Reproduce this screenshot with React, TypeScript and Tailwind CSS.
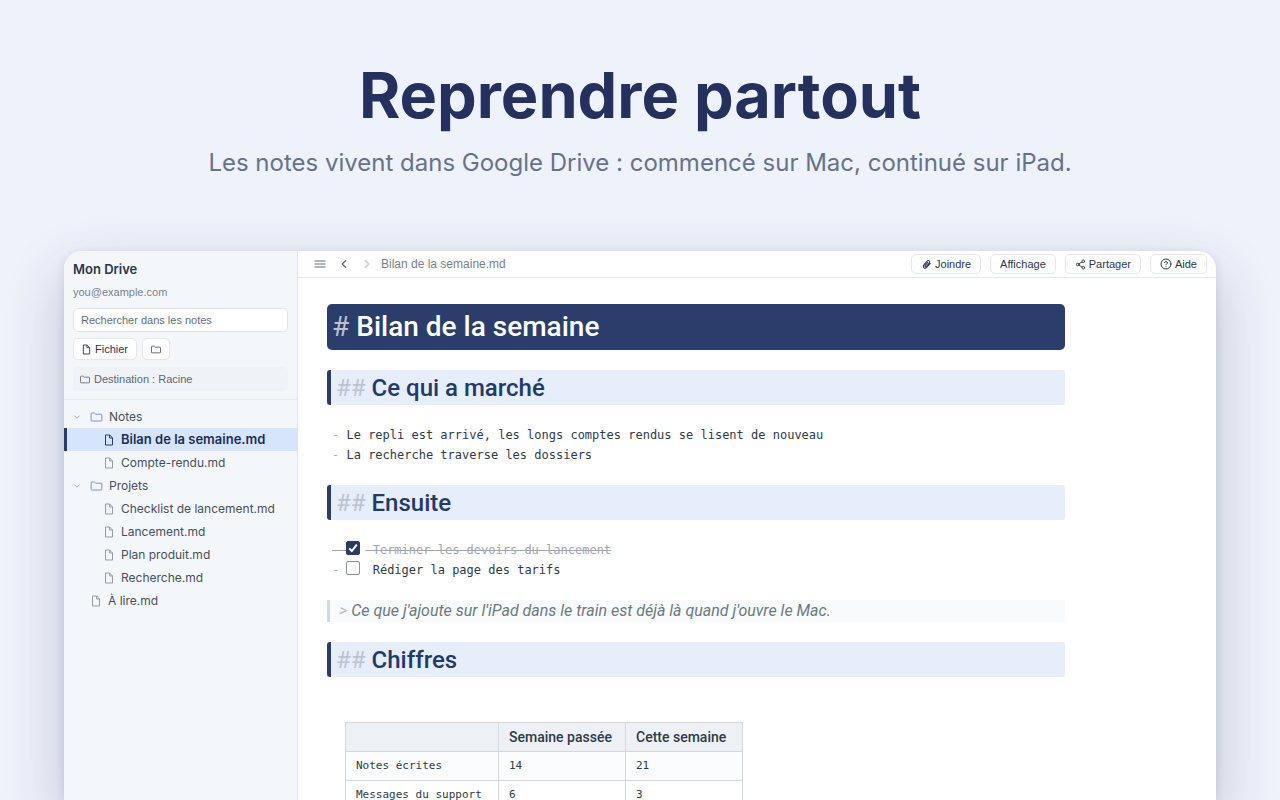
import React from 'react';
import { ChevronDown, ChevronLeft, ChevronRight, CircleHelp, Share2 } from 'lucide-react';

const tree = [
  { name: 'Notes', type: 'folder', depth: 0 },
  { name: 'Bilan de la semaine.md', type: 'file', depth: 1, active: true },
  { name: 'Compte-rendu.md', type: 'file', depth: 1 },
  { name: 'Projets', type: 'folder', depth: 0 },
  { name: 'Checklist de lancement.md', type: 'file', depth: 1 },
  { name: 'Lancement.md', type: 'file', depth: 1 },
  { name: 'Plan produit.md', type: 'file', depth: 1 },
  { name: 'Recherche.md', type: 'file', depth: 1 },
  { name: 'À lire.md', type: 'file', depth: 0 },
];

const rows = [
  ['Notes écrites', '14', '21'],
  ['Messages du support', '6', '3'],
];

function FileIcon({ className }: { className: string }) {
  return (
    <svg viewBox="0 0 10 12" className={className} fill="none" stroke="currentColor" strokeLinejoin="round">
      <path d="M1.5 1h4.2l2.8 2.9V11h-7z" />
      <path d="M5.6 1v3h2.9" />
    </svg>
  );
}

function FolderIcon({ className }: { className: string }) {
  return (
    <svg viewBox="0 0 12 10" className={className} fill="none" stroke="currentColor" strokeLinejoin="round">
      <path d="M.6 8.2V1.8q0-.8.8-.8h2.5l1.3 1.2h5.3q.9 0 .9.9v5.1q0 .8-.8.8H1.4q-.8 0-.8-.8z" />
    </svg>
  );
}

function MenuIcon() {
  return (
    <svg viewBox="0 0 12 12" className="h-3 w-3" fill="none" stroke="currentColor" strokeWidth="1.1">
      <path d="M.5 3h11M.5 6h11M.5 9h11" />
    </svg>
  );
}

function ClipIcon() {
  return (
    <svg viewBox="0 0 12 12" className="h-[11px] w-[11px]" fill="none" stroke="currentColor" strokeLinecap="round">
      <path d="M10 4.8 6.2 9.3a2 2 0 0 1-3.2-2.6l3.8-4.5a1.5 1.5 0 0 1 2.4 1.9L5.7 8.2a.8.8 0 0 1-1.3-1l3-3.5" strokeWidth="1.1" />
    </svg>
  );
}

function ToolbarButton({ children }: { children: React.ReactNode }) {
  return (
    <button className="flex h-5 items-center gap-[3px] rounded-[5px] border border-[#e3e6ea] bg-white px-[9px] text-[11px] text-[#2b3648]">
      {children}
    </button>
  );
}

function Heading({ children }: { children: React.ReactNode }) {
  return (
    <h2 className="flex h-[35px] items-center gap-[6px] rounded-[3px] border-l-4 border-[#2b3a67] bg-[#e6edfb] pl-[5px] font-['Roboto',sans-serif] text-2xl font-medium text-[#1f3b68]">
      <span className="font-normal text-[#bcc3d0]">##</span>
      {children}
    </h2>
  );
}

export default function App() {
  return (
    <div className="flex h-screen flex-col overflow-hidden bg-[#eef2fb] px-16 font-['Inter',sans-serif]">
      <header className="flex h-[251px] shrink-0 flex-col items-center pt-[59px] text-center">
        <h1 className="text-[63px] leading-[72px] font-bold text-[#24305e]">Reprendre partout</h1>
        <p className="mt-[14px] text-2xl leading-9 text-[#68718a]">
          Les notes vivent dans Google Drive : commencé sur Mac, continué sur iPad.
        </p>
      </header>

      <div className="flex min-h-0 flex-1 overflow-hidden rounded-t-[18px] bg-white shadow-[0_24px_60px_rgba(36,48,80,0.24),0_2px_8px_rgba(36,48,80,0.12)]">
        <aside className="w-[234px] shrink-0 border-r border-[#dfe3e8] bg-[#f4f7fa]">
          <div className="border-b border-[#e6e9ed] px-[9px] pt-[9px] pb-2">
            <div className="text-[13px] leading-[18px] font-semibold text-[#2b3648]">Mon Drive</div>
            <div className="mt-[6px] font-['Liberation_Sans',sans-serif] text-[11px] leading-4 text-[#7a828e]">you@example.com</div>
            <input
              type="search"
              aria-label="Rechercher dans les notes"
              placeholder="Rechercher dans les notes"
              className="mt-2 block h-6 w-full rounded-[5px] border border-[#dfe3e8] bg-white px-[7px] font-['Liberation_Sans',sans-serif] text-[11px] placeholder:text-[#666d78]"
            />
            <div className="mt-[6px] flex gap-[5px] font-['Liberation_Sans',sans-serif]">
              <button className="flex h-[22px] items-center gap-1 rounded-[5px] border border-[#e3e6ea] bg-white px-2 text-[11px] text-[#2b3648]">
                <FileIcon className="h-[11px] w-[9px]" />
                Fichier
              </button>
              <button aria-label="Nouveau dossier" className="flex h-[22px] items-center rounded-[5px] border border-[#e3e6ea] bg-white px-2 text-[#4a5361]">
                <FolderIcon className="h-[9px] w-[10px]" />
              </button>
            </div>
            <div className="mt-[7px] flex h-6 items-center gap-1 rounded-[5px] bg-[#eff2f6] px-[7px] font-['Liberation_Sans',sans-serif] text-[11px] text-[#5f6875]">
              <FolderIcon className="h-[9px] w-[10px]" />
              Destination : Racine
            </div>
          </div>

          <nav className="pt-[5px]">
            {tree.map((item) => (
              <a
                key={item.name}
                href="#"
                className={`flex h-[23px] items-center border-l-3 whitespace-nowrap ${
                  item.depth === 1 ? 'pl-[37px]' : item.type === 'file' ? 'pl-6' : 'pl-[5px]'
                } ${
                  item.active
                    ? 'border-[#2b3a67] bg-[#d6e5fb] text-[13px] font-semibold text-[#1f2d54]'
                    : 'border-transparent text-xs text-[#474f5c]'
                }`}
              >
                {item.type === 'folder' ? (
                  <>
                    <ChevronDown className="mr-2 h-[10px] w-[10px] text-[#9aa1ac]" />
                    <FolderIcon className="mr-[6px] h-[10px] w-[13px] text-[#7f8bd0]" />
                  </>
                ) : (
                  <FileIcon className={`mr-[7px] h-3 w-[10px] ${item.active ? 'text-[#2b3a67]' : 'text-[#959ba5]'}`} />
                )}
                {item.name}
              </a>
            ))}
          </nav>
        </aside>

        <main className="min-w-0 flex-1">
          <div className="flex h-[27px] items-center border-b border-[#e3e6ea] pr-[9px] pl-4 font-['Liberation_Sans',sans-serif]">
            <button aria-label="Menu" className="text-[#5f6875]">
              <MenuIcon />
            </button>
            <button aria-label="Précédent" className="ml-[11px] text-[#5f6875]">
              <ChevronLeft className="h-[14px] w-[14px]" />
            </button>
            <button aria-label="Suivant" className="ml-[9px] text-[#c4c8ce]">
              <ChevronRight className="h-[14px] w-[14px]" />
            </button>
            <span className="ml-[7px] text-xs text-[#7a7f88]">Bilan de la semaine.md</span>
            <div className="ml-auto flex gap-[9px]">
              <ToolbarButton>
                <ClipIcon />
                Joindre
              </ToolbarButton>
              <ToolbarButton>Affichage</ToolbarButton>
              <ToolbarButton>
                <Share2 className="h-[11px] w-[11px]" />
                Partager
              </ToolbarButton>
              <ToolbarButton>
                <CircleHelp className="h-3 w-3" />
                Aide
              </ToolbarButton>
            </div>
          </div>

          <article className="ml-[29px] flex max-w-[738px] flex-col gap-5 pt-[26px] font-['DejaVu_Sans_Mono',monospace] text-xs leading-5 text-[#2f3a48]">
            <h1 className="flex h-[46px] items-center gap-[7px] rounded-[5px] bg-[#2b3d6b] px-[5px] font-['Roboto',sans-serif] text-[28px] font-medium text-white">
              <span className="font-normal text-[#bcc3d0]">#</span>
              Bilan de la semaine
            </h1>

            <Heading>Ce qui a marché</Heading>
            <ul className="pl-[5px] whitespace-pre">
              <li><span className="text-[#a9b0ba]">- </span>Le repli est arrivé, les longs comptes rendus se lisent de nouveau</li>
              <li><span className="text-[#a9b0ba]">- </span>La recherche traverse les dossiers</li>
            </ul>

            <Heading>Ensuite</Heading>
            <ul className="pl-[5px] whitespace-pre">
              <li>
                <label className="flex items-start text-[#a0a6af]">
                  <span className="line-through">- </span>
                  <span className="relative mt-px flex h-[14px] w-[14px]">
                    <input type="checkbox" defaultChecked className="h-[14px] w-[14px] appearance-none rounded-[2px] border border-[#8b9099] bg-white checked:border-[#2b3a67] checked:bg-[#2b3a67]" />
                    <svg viewBox="0 0 14 14" className="pointer-events-none absolute inset-0" fill="none" stroke="white" strokeWidth="2">
                      <path d="M3.2 7.4 5.8 10l5-6.3" />
                    </svg>
                  </span>
                  <span className="ml-[5px] line-through"> Terminer les devoirs du lancement</span>
                </label>
              </li>
              <li>
                <label className="flex items-start">
                  <span className="text-[#a9b0ba]">- </span>
                  <input type="checkbox" className="mt-px h-[14px] w-[14px] appearance-none rounded-[2px] border border-[#8b9099] bg-white" />
                  <span className="ml-[5px]"> Rédiger la page des tarifs</span>
                </label>
              </li>
            </ul>

            <blockquote className="flex h-[22px] items-center gap-1 border-l-3 border-[#d3d8dd] bg-[#f8fafb] pl-[9px] font-['Roboto',sans-serif] text-base whitespace-nowrap text-[#6c7a80] italic">
              <span className="text-[#b4bac1]">&gt;</span>
              Ce que j'ajoute sur l'iPad dans le train est déjà là quand j'ouvre le Mac.
            </blockquote>

            <Heading>Chiffres</Heading>

            <table className="mt-[25px] ml-[18px] w-[398px] table-fixed border-collapse text-left">
              <colgroup>
                <col className="w-[153px]" />
                <col className="w-[127px]" />
                <col />
              </colgroup>
              <thead>
                <tr className="h-[29px] bg-[#edf1f6] font-['Roboto',sans-serif] text-sm">
                  <th aria-label="Indicateur" className="border border-[#d3d8de]"></th>
                  <th className="border border-[#d3d8de] px-[10px] font-medium whitespace-nowrap">Semaine passée</th>
                  <th className="border border-[#d3d8de] px-[10px] font-medium whitespace-nowrap">Cette semaine</th>
                </tr>
              </thead>
              <tbody>
                {rows.map((row, index) => (
                  <tr key={row[0]} className={index % 2 === 0 ? 'h-[29px] bg-[#fbfcfe]' : 'h-[29px] bg-white'}>
                    {row.map((cell) => (
                      <td key={cell} className="border border-[#d3d8de] px-[10px] text-[11px] whitespace-nowrap">
                        {cell}
                      </td>
                    ))}
                  </tr>
                ))}
              </tbody>
            </table>
          </article>
        </main>
      </div>
    </div>
  );
}
